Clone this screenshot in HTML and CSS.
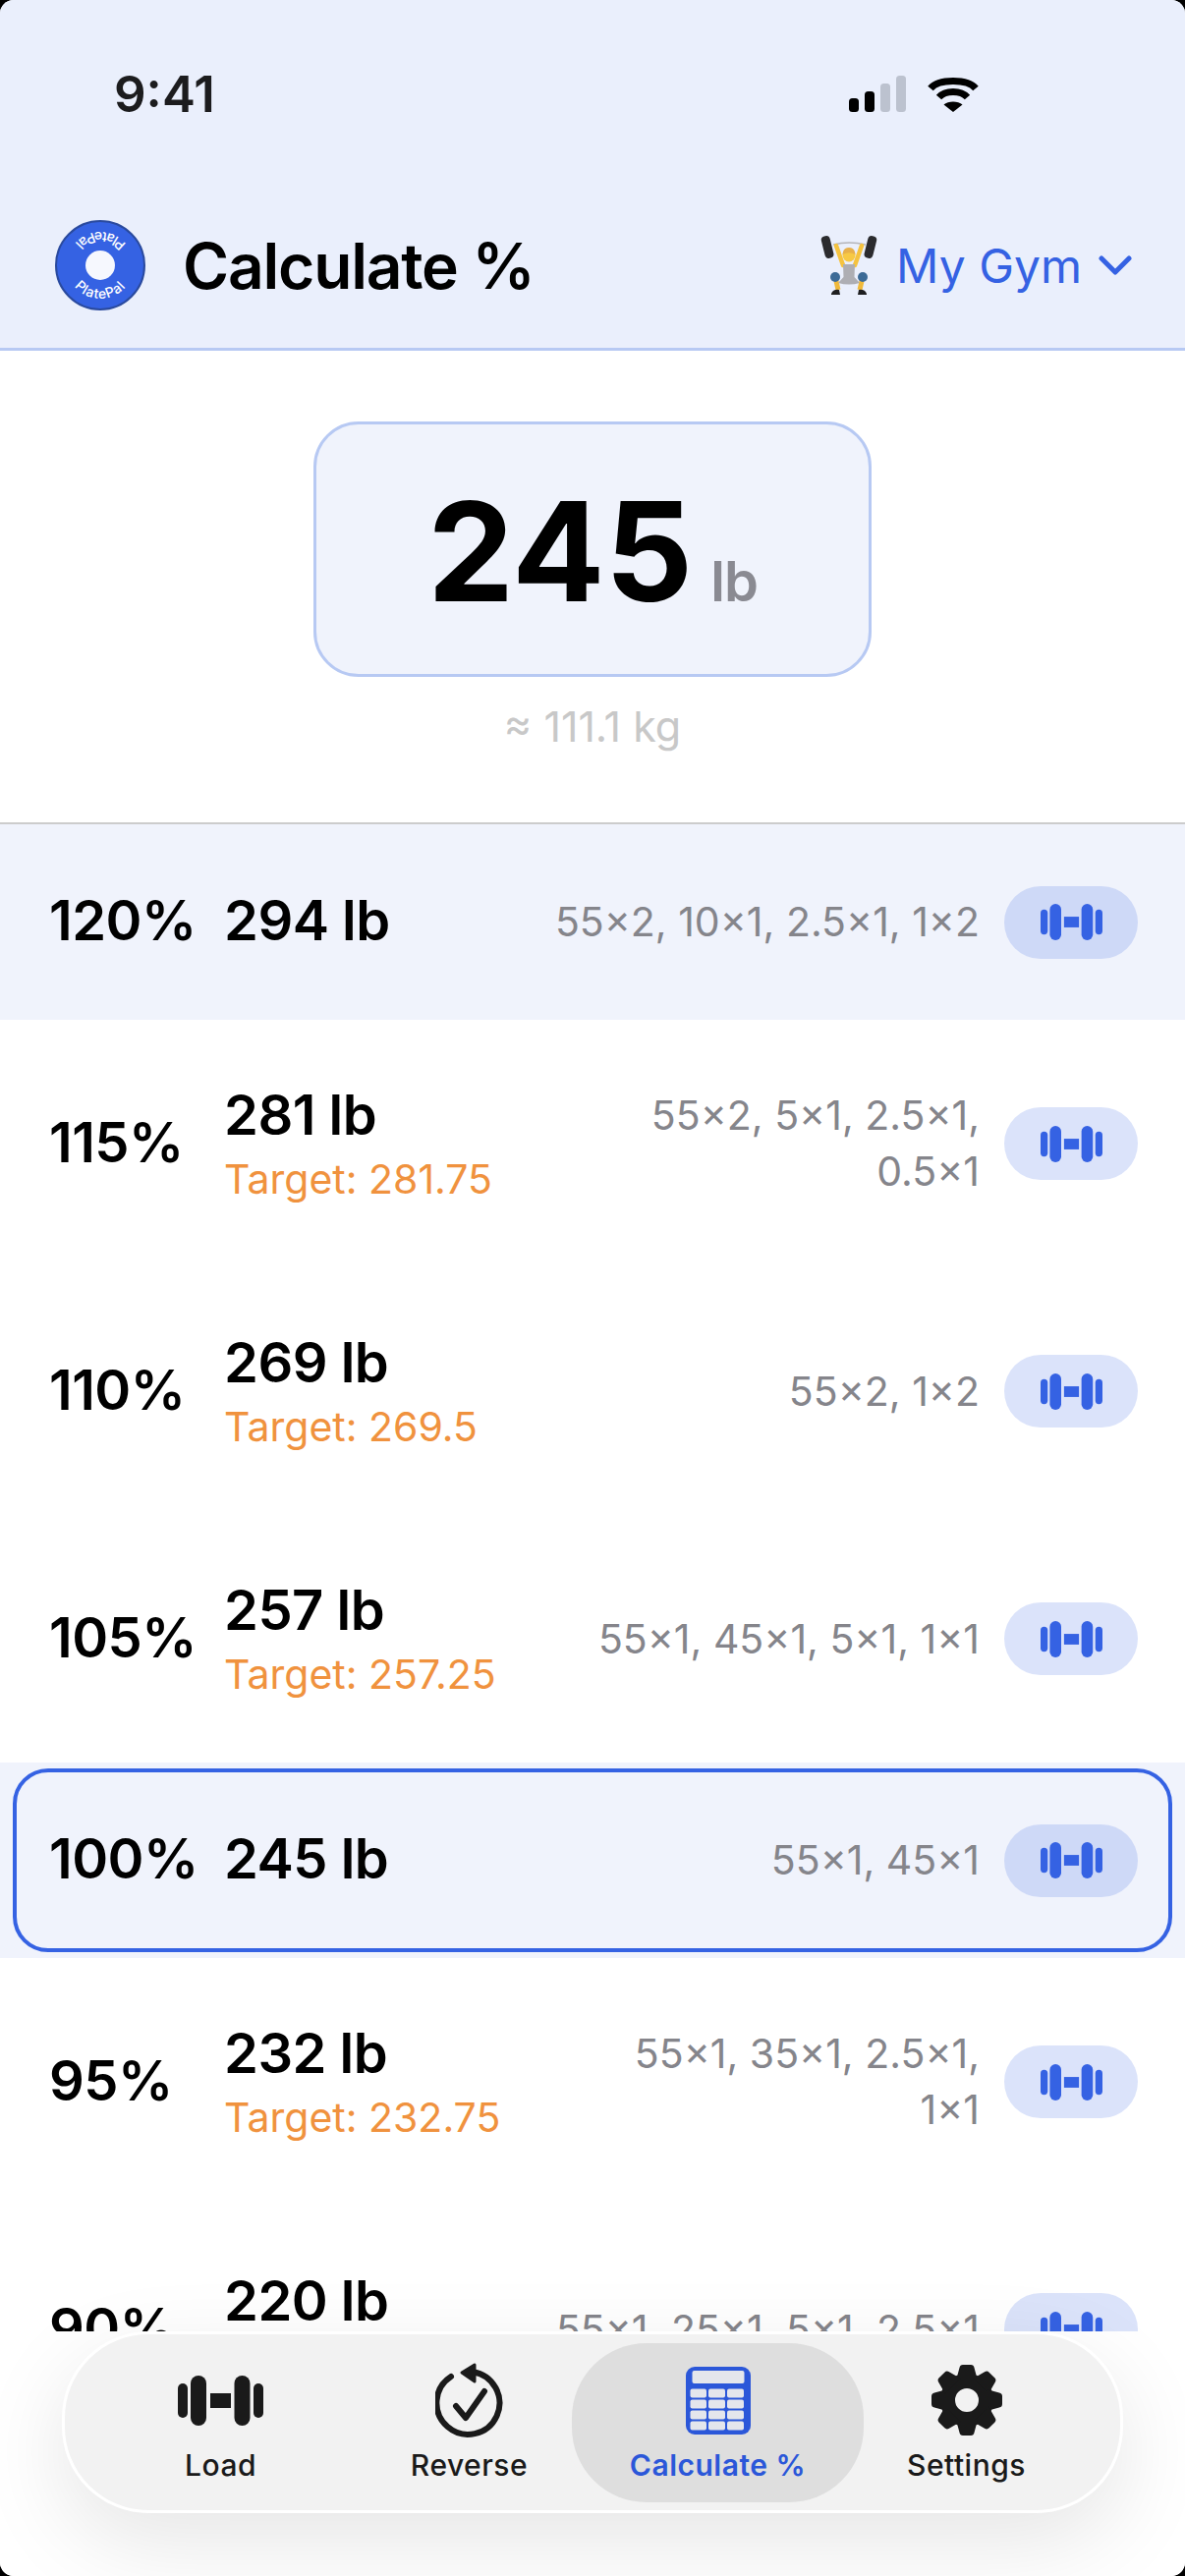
FILE: index.html
```html
<!DOCTYPE html>
<html lang="en">

<head>
    <meta charset="UTF-8">
    <meta name="viewport" content="width=device-width, initial-scale=1.0">
    <title>Calculate %</title>
    <link rel="stylesheet" href="styles.css">
</head>

<body>

    <svg class="sprites" aria-hidden="true">
        <symbol id="dumbbell" viewBox="0 0 87 51">
            <rect x="0" y="8" width="10" height="35" rx="5"/>
            <rect x="13" y="0" width="16" height="51" rx="8"/>
            <rect x="33" y="18" width="21" height="15"/>
            <rect x="57.5" y="0" width="16" height="51" rx="8"/>
            <rect x="77" y="8" width="10" height="35" rx="5"/>
        </symbol>
    </svg>

    <div class="screen">
        <header class="header">
            <div class="status-bar">
                <span class="time">9:41</span>
                <div class="status-icons">
                    <svg width="58" height="37" viewBox="0 0 58 37">
                        <rect x="0" y="23" width="10" height="14" rx="3.5" fill="#000"/>
                        <rect x="16" y="16" width="10" height="21" rx="3.5" fill="#000"/>
                        <rect x="32" y="8" width="10" height="29" rx="3.5" fill="#bcc2cf"/>
                        <rect x="48" y="0" width="10" height="37" rx="3.5" fill="#bcc2cf"/>
                    </svg>
                    <svg width="52" height="37" viewBox="0 0 52 37">
                        <path d="M3 13C11 3 41 3 49 13" fill="none" stroke="#000" stroke-width="7"/>
                        <path d="M11.5 22C18 14.500 34 14.500 40.500 22" fill="none" stroke="#000" stroke-width="7"/>
                        <path d="M16.500 29.500C21 25.500 31 25.500 35.500 29.500L26 37Z" fill="#000"/>
                    </svg>
                </div>
            </div>
            <div class="title-bar">
                <svg class="logo" width="92" height="92" viewBox="-46 -46 92 92">
                    <circle r="45" fill="#3562e3" stroke="#2a4a9e" stroke-width="2"/>
                    <circle r="15" fill="#f6f8fe"/>
                    <path id="logo-ring" d="M-34 0A34 34 0 0 0 34 0A34 34 0 0 0 -34 0" fill="none"/>
                    <text class="logo-text"><textPath href="#logo-ring" startOffset="25%">PlatePal</textPath></text>
                    <text class="logo-text"><textPath href="#logo-ring" startOffset="75%">PlatePal</textPath></text>
                </svg>
                <h1 class="title">Calculate %</h1>
                <div class="gym-picker">
                    <svg class="lifter" width="58" height="62" viewBox="0 0 58 62">
                        <path d="M13 10Q29 6 46 10" fill="none" stroke="#b5b5ba" stroke-width="1.500"/>
                        <rect x="2.500" y="1" width="9" height="23" rx="4" fill="#2b2b2e" transform="rotate(-14 7 12)"/>
                        <rect x="46.500" y="1" width="9" height="23" rx="4" fill="#2b2b2e" transform="rotate(14 51 12)"/>
                        <path d="M23 31L16 11M35 31L42 11" fill="none" stroke="#f5c33f" stroke-width="4.500" stroke-linecap="round"/>
                        <path d="M16 47L18 56M42 47L40 56" fill="none" stroke="#f0b93a" stroke-width="5"/>
                        <path d="M23 30H35L34.500 43L40 49Q29 52 18 49L23.500 43Z" fill="#aeaeb3"/>
                        <circle cx="15" cy="43" r="5" fill="#3c6a96"/>
                        <circle cx="43" cy="43" r="5" fill="#3c6a96"/>
                        <circle cx="29" cy="21" r="6.500" fill="#f7c944"/>
                        <path d="M22.500 20Q23 13 29 13Q35 13 35.500 20Q29 16.500 22.500 20Z" fill="#e8b04a"/>
                        <path d="M11 60Q13 55 19 56L20 61H11ZM47 60Q45 55 39 56L38 61H47Z" fill="#1e1e20"/>
                    </svg>
                    <span class="gym-name">My Gym</span>
                    <svg width="34" height="20" viewBox="0 0 34 20">
                        <path d="M3 3L17 17L31 3" fill="none" stroke="#3562e3" stroke-width="5" stroke-linecap="round" stroke-linejoin="round"/>
                    </svg>
                </div>
            </div>
        </header>

        <section class="hero">
            <div class="hero-card">
                <span class="hero-number">245</span>
                <span class="hero-unit">lb</span>
            </div>
            <p class="hero-sub">≈ 111.1 kg</p>
        </section>

        <div class="list">
            <div class="row row-tinted">
                <span class="pct">120%</span>
                <div class="weight"><div class="lbs">294 lb</div></div>
                <div class="plates">55×2, 10×1, 2.5×1, 1×2</div>
                <button class="load-btn"><svg width="63" height="37"><use href="#dumbbell"/></svg></button>
            </div>
            <div class="row">
                <span class="pct">115%</span>
                <div class="weight"><div class="lbs">281 lb</div><div class="target">Target: 281.75</div></div>
                <div class="plates">55×2, 5×1, 2.5×1,<br>0.5×1</div>
                <button class="load-btn"><svg width="63" height="37"><use href="#dumbbell"/></svg></button>
            </div>
            <div class="row">
                <span class="pct">110%</span>
                <div class="weight"><div class="lbs">269 lb</div><div class="target">Target: 269.5</div></div>
                <div class="plates">55×2, 1×2</div>
                <button class="load-btn"><svg width="63" height="37"><use href="#dumbbell"/></svg></button>
            </div>
            <div class="row">
                <span class="pct">105%</span>
                <div class="weight"><div class="lbs">257 lb</div><div class="target">Target: 257.25</div></div>
                <div class="plates">55×1, 45×1, 5×1, 1×1</div>
                <button class="load-btn"><svg width="63" height="37"><use href="#dumbbell"/></svg></button>
            </div>
            <div class="row row-tinted row-current">
                <span class="pct">100%</span>
                <div class="weight"><div class="lbs">245 lb</div></div>
                <div class="plates">55×1, 45×1</div>
                <button class="load-btn"><svg width="63" height="37"><use href="#dumbbell"/></svg></button>
            </div>
            <div class="row">
                <span class="pct">95%</span>
                <div class="weight"><div class="lbs">232 lb</div><div class="target">Target: 232.75</div></div>
                <div class="plates">55×1, 35×1, 2.5×1,<br>1×1</div>
                <button class="load-btn"><svg width="63" height="37"><use href="#dumbbell"/></svg></button>
            </div>
            <div class="row">
                <span class="pct">90%</span>
                <div class="weight"><div class="lbs">220 lb</div><div class="target">Target: 220.5</div></div>
                <div class="plates">55×1, 25×1, 5×1, 2.5×1</div>
                <button class="load-btn"><svg width="63" height="37"><use href="#dumbbell"/></svg></button>
            </div>
        </div>

        <footer class="footer">
            <nav class="tabs">
                <a href="#" class="tab">
                    <span class="tab-icon"><svg width="87" height="51"><use href="#dumbbell"/></svg></span>
                    Load
                </a>
                <a href="#" class="tab">
                    <span class="tab-icon">
                        <svg width="70" height="77" viewBox="0 0 70 77">
                            <path d="M16 14A32 32 0 1 0 38 9.200" fill="none" stroke="#1a1a1a" stroke-width="6" stroke-linecap="round"/>
                            <path d="M27 10L40 2V19Z" fill="#1a1a1a" stroke="#1a1a1a" stroke-width="3" stroke-linejoin="round"/>
                            <path d="M21 44L31 56L50 29" fill="none" stroke="#1a1a1a" stroke-width="6" stroke-linecap="round" stroke-linejoin="round"/>
                        </svg>
                    </span>
                    Reverse
                </a>
                <a href="#" class="tab tab-active">
                    <span class="tab-icon">
                        <svg width="66" height="69" viewBox="0 0 66 69">
                            <rect width="66" height="69" rx="9" fill="#2b57d9"/>
                            <g fill="#e4e6ec">
                                <rect x="6.500" y="4" width="53" height="13" rx="2"/>
                                <rect x="4.500" y="22.500" width="16.500" height="9" rx="2"/>
                                <rect x="23" y="22.500" width="17" height="9" rx="2"/>
                                <rect x="42" y="22.500" width="17" height="9" rx="2"/>
                                <rect x="4.500" y="33.500" width="16.500" height="9" rx="2"/>
                                <rect x="23" y="33.500" width="17" height="9" rx="2"/>
                                <rect x="42" y="33.500" width="17" height="9" rx="2"/>
                                <rect x="4.500" y="44.500" width="16.500" height="9" rx="2"/>
                                <rect x="23" y="44.500" width="17" height="9" rx="2"/>
                                <rect x="42" y="44.500" width="17" height="9" rx="2"/>
                                <rect x="4.500" y="55.500" width="16.500" height="9" rx="2"/>
                                <rect x="23" y="55.500" width="17" height="9" rx="2"/>
                                <rect x="42" y="55.500" width="17" height="9" rx="2"/>
                            </g>
                        </svg>
                    </span>
                    Calculate %
                </a>
                <a href="#" class="tab">
                    <span class="tab-icon">
                        <svg width="72" height="72" viewBox="-36 -36 72 72" fill="#1a1a1a">
                            <circle r="19.500" fill="none" stroke="#1a1a1a" stroke-width="15"/>
                            <g id="gear-tooth"><path d="M-11 -20L-7.500 -33Q-7 -36 -4 -36H4Q7 -36 7.500 -33L11 -20Z"/></g>
                            <use href="#gear-tooth" transform="rotate(45)"/>
                            <use href="#gear-tooth" transform="rotate(90)"/>
                            <use href="#gear-tooth" transform="rotate(135)"/>
                            <use href="#gear-tooth" transform="rotate(180)"/>
                            <use href="#gear-tooth" transform="rotate(225)"/>
                            <use href="#gear-tooth" transform="rotate(270)"/>
                            <use href="#gear-tooth" transform="rotate(315)"/>
                        </svg>
                    </span>
                    Settings
                </a>
            </nav>
        </footer>
    </div>

</body>

</html>
```

FILE: styles.css
```css
* {
    margin: 0;
    padding: 0;
    box-sizing: border-box;
}

body {
    font-family: Inter, "Liberation Sans", sans-serif;
    background-color: #000000;
    color: #000000;
}

.sprites {
    display: none;
}

.screen {
    display: flex;
    flex-direction: column;
    height: 2622px;
    overflow: hidden;
    background-color: #ffffff;
    border-radius: 14px;
}

/* Header */
.header {
    background-color: #eaeffc;
    border-bottom: 3px solid #b7c9f3;
    height: 357px;
}

.status-bar {
    display: flex;
    justify-content: space-between;
    align-items: center;
    height: 190px;
    padding: 0 210px 0 116px;
}

.time {
    font-size: 51px;
    font-weight: 600;
    color: #1c1c1e;
}

.status-icons {
    display: flex;
    gap: 22px;
}

.title-bar {
    display: flex;
    align-items: center;
    height: 164px;
    padding: 0 54px 4px 56px;
}

.logo-text {
    font-size: 14px;
    font-weight: 500;
    letter-spacing: 0.8px;
    fill: #ffffff;
    text-anchor: middle;
}

.title {
    flex: 1;
    margin-left: 38px;
    font-size: 64px;
    font-weight: 600;
    letter-spacing: -1.2px;
}

.gym-picker {
    display: flex;
    align-items: center;
    color: #3562e3;
}

.gym-name {
    margin: 0 17px 0 19px;
    font-size: 48px;
}

/* Hero */
.hero {
    display: flex;
    flex-direction: column;
    align-items: center;
    height: 482px;
    padding-top: 72px;
    border-bottom: 2px solid #cccccc;
}

.hero-card {
    display: flex;
    justify-content: center;
    align-items: baseline;
    gap: 18px;
    width: 568px;
    height: 260px;
    padding-top: 44px;
    background-color: #f0f3fc;
    border: 3px solid #b7c9f3;
    border-radius: 46px;
}

.hero-number {
    font-size: 140px;
    font-weight: 700;
}

.hero-unit {
    font-size: 56px;
    font-weight: 600;
    letter-spacing: -1px;
    color: #8a8a92;
}

.hero-sub {
    margin-top: 24px;
    font-size: 43px;
    color: #c8c8c8;
}

/* Rows */
.list {
    flex: 1;
    min-height: 0;
    overflow: hidden;
}

.row {
    display: flex;
    align-items: center;
    height: 252px;
    padding: 0 48px 0 50px;
}

.row-tinted {
    height: 199px;
    background-color: #f0f3fc;
}

.row-current {
    position: relative;
}

.row-current::before {
    content: "";
    position: absolute;
    inset: 6px 13px;
    border: 4px solid #3562e3;
    border-radius: 36px;
}

.pct {
    width: 178px;
    margin-bottom: 3px;
    font-size: 56px;
    font-weight: 600;
    letter-spacing: -0.5px;
}

.weight {
    margin-bottom: 3px;
}

.lbs {
    font-size: 56px;
    line-height: 68px;
    font-weight: 600;
    letter-spacing: -0.5px;
}

.target {
    margin-top: 7px;
    font-size: 41px;
    line-height: 48px;
    color: #f0923e;
}

.plates {
    flex: 1;
    margin-right: 25px;
    font-size: 41px;
    line-height: 57px;
    text-align: right;
    white-space: nowrap;
    color: #85858b;
}

.load-btn {
    display: flex;
    justify-content: center;
    align-items: center;
    width: 136px;
    height: 74px;
    border: none;
    border-radius: 37px;
    background-color: rgba(54, 98, 228, 0.18);
    fill: #3562e3;
}

/* Bottom tabs */
.footer {
    position: relative;
    z-index: 1;
    height: 249px;
    padding: 0 63px;
    background-color: #ffffff;
}

.tabs {
    display: grid;
    grid-template-columns: repeat(4, 253px);
    height: 185px;
    padding: 9px 32px 8px;
    background-color: #f2f2f2;
    border: 3px solid #ffffff;
    border-radius: 88px;
    box-shadow: 0 30px 90px rgba(0, 0, 0, 0.1);
}

.tab {
    display: flex;
    flex-direction: column;
    align-items: center;
    padding-top: 19px;
    font-size: 30px;
    line-height: 36px;
    font-weight: 500;
    letter-spacing: 0.5px;
    color: #1a1a1a;
    fill: #1a1a1a;
    text-decoration: none;
}

.tab-icon {
    display: flex;
    justify-content: center;
    align-items: center;
    height: 78px;
    margin-bottom: 9px;
}

.tab-active {
    margin: 0 -22px;
    background-color: #dedede;
    border-radius: 76px;
    font-weight: 600;
    color: #2b57d9;
}
```
